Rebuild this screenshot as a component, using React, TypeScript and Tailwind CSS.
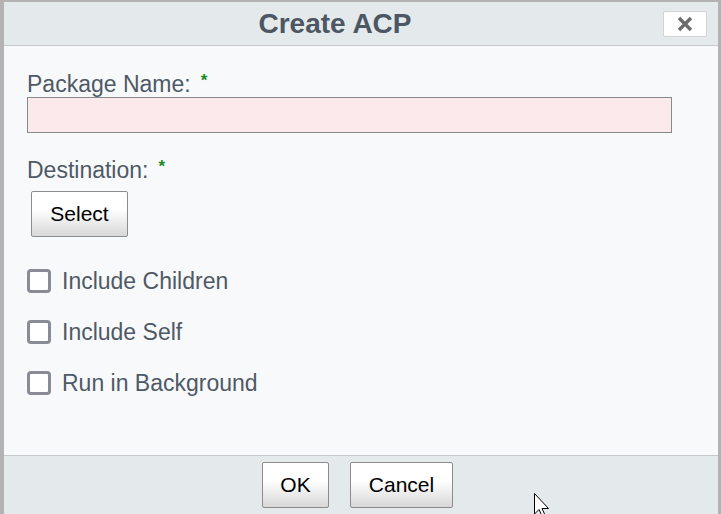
import React from "react";

const font = { fontFamily: '"Liberation Sans", Arial, sans-serif' };

const DialogButton: React.FC<{ label: string; className?: string }> = ({
  label,
  className = "",
}) => (
  <button
    className={`h-[46px] border border-[#8c8c8c] bg-gradient-to-b from-white from-40% to-[#d8d8d8] text-[21px] text-black rounded-[2px] ${className}`}
  >
    {label}
  </button>
);

const CheckRow: React.FC<{ label: string }> = ({ label }) => (
  <label className="flex items-center h-[24px]">
    <span className="w-[24px] h-[24px] border-[3px] border-[#8b8b97] rounded-[4px] bg-white shrink-0" />
    <span className="ml-[11px] text-[23px] text-[#4f5966]">{label}</span>
  </label>
);

export default function App() {
  return (
    <div
      className="w-[721px] h-[514px] bg-[#b3b3b3] pt-[2px] pl-[4px] pr-[3px] overflow-hidden relative"
      style={font}
    >
      <div className="flex flex-col h-[512px] bg-[#f8f9fb]">
        {/* header */}
        <div className="relative h-[44px] shrink-0 bg-[#e4eaeb] border-b border-[#c3c9cb] flex items-center justify-center pr-[52px]">
          <h1 className="text-[28px] font-bold text-[#4d5663] leading-none">
            Create ACP
          </h1>
          <button className="absolute left-[659px] top-[9px] w-[44px] h-[26px] bg-white border border-[#d0d4d6] rounded-[2px] flex items-center justify-center">
            <svg width="18" height="18" viewBox="0 0 18 18">
              <path
                d="M3 3 L15 15 M15 3 L3 15"
                stroke="#6b6b6b"
                strokeWidth="3.4"
                strokeLinecap="butt"
              />
            </svg>
          </button>
        </div>

        {/* body */}
        <div className="flex-1 pl-[23px] pt-[25px]">
          <div className="text-[23px] text-[#4f5966] leading-[26px] flex items-start">
            Package Name:
            <span className="text-[#1e8a1e] font-bold text-[17px] ml-[10px] leading-[20px]">
              *
            </span>
          </div>
          <input
            className="block w-[645px] h-[36px] bg-[#fbe9ec] border border-[#8a8a8a] outline-none"
            style={font}
          />
          <div className="mt-[24px] text-[23px] text-[#4f5966] leading-[26px] flex items-start">
            Destination:
            <span className="text-[#1e8a1e] font-bold text-[17px] ml-[10px] leading-[20px]">
              *
            </span>
          </div>
          <DialogButton label="Select" className="mt-[8px] ml-[4px] w-[97px]" />
          <div className="mt-[32px] flex flex-col gap-[27px]">
            <CheckRow label="Include Children" />
            <CheckRow label="Include Self" />
            <CheckRow label="Run in Background" />
          </div>
        </div>

        {/* footer */}
        <div className="h-[59px] shrink-0 bg-[#e4eaeb] border-t border-[#c3c9cb] flex justify-center gap-[21px] pt-[6px] pr-[7px]">
          <DialogButton label="OK" className="w-[67px]" />
          <DialogButton label="Cancel" className="w-[103px]" />
        </div>
      </div>

      {/* mouse pointer */}
      <svg
        className="absolute left-[534px] top-[493px]"
        width="20"
        height="24"
        viewBox="0 0 20 24"
      >
        <path
          d="M0.5 0.5 L0.5 21 L5 16.5 L8 23 L11 22 L8 15.5 L14.5 15.5 Z"
          fill="white"
          stroke="black"
          strokeWidth="1"
        />
      </svg>
    </div>
  );
}
